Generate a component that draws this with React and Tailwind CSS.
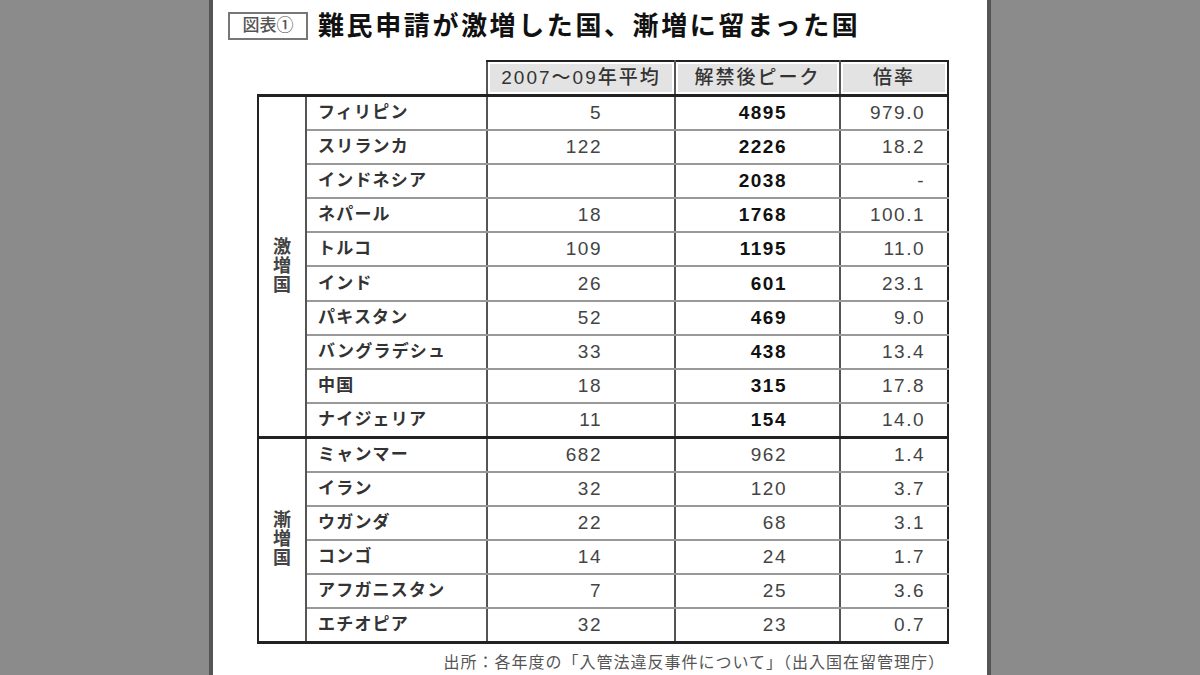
import React from 'react'

const surge = [
  ['フィリピン', '5', '4895', '979.0'],
  ['スリランカ', '122', '2226', '18.2'],
  ['インドネシア', '', '2038', '-'],
  ['ネパール', '18', '1768', '100.1'],
  ['トルコ', '109', '1195', '11.0'],
  ['インド', '26', '601', '23.1'],
  ['パキスタン', '52', '469', '9.0'],
  ['バングラデシュ', '33', '438', '13.4'],
  ['中国', '18', '315', '17.8'],
  ['ナイジェリア', '11', '154', '14.0'],
]

const gradual = [
  ['ミャンマー', '682', '962', '1.4'],
  ['イラン', '32', '120', '3.7'],
  ['ウガンダ', '22', '68', '3.1'],
  ['コンゴ', '14', '24', '1.7'],
  ['アフガニスタン', '7', '25', '3.6'],
  ['エチオピア', '32', '23', '0.7'],
]

const font = { fontFamily: '"Liberation Sans", "Noto Sans CJK JP", sans-serif' }

function VerticalLabel({ text }) {
  return (
    <div className="flex flex-col items-center text-[18px] leading-[19px] text-[#444] font-semibold">
      {text.split('').map((c, i) => (
        <span key={i}>{c}</span>
      ))}
    </div>
  )
}

function Rows({ data, label }) {
  return data.map((r, i) => {
    const first = i === 0
    const top = first ? 'border-t-[3px] border-t-[#222]' : ''
    return (
      <tr key={r[0]} className="h-[34.2px] leading-[20px]">
        {first && (
          <td
            rowSpan={data.length}
            className="border-l-2 border-l-[#222] border-r-2 border-r-[#555] border-t-[3px] border-t-[#222] border-b-2 border-b-[#222] align-middle"
          >
            <VerticalLabel text={label} />
          </td>
        )}
        <td className={`${top} border-b-2 border-b-[#999] border-r-2 border-r-[#555] pl-[11px] text-[17px] tracking-[1.2px] text-[#333] font-semibold whitespace-nowrap`}>
          {r[0]}
        </td>
        <td className={`${top} border-b-2 border-b-[#999] border-r-2 border-r-[#555] pr-[72px] text-right text-[19px] tracking-[1.5px] text-[#444]`}>
          {r[1]}
        </td>
        <td
          className={`${top} border-b-2 border-b-[#999] border-r-2 border-r-[#555] pr-[52px] text-right text-[19px] tracking-[1.5px] ${
            label === '激増国' ? 'font-bold text-[#111]' : 'text-[#444]'
          }`}
        >
          {r[2]}
        </td>
        <td className={`${top} border-b-2 border-b-[#999] border-r-2 border-r-[#222] pr-[22px] text-right text-[19px] tracking-[1.5px] text-[#444]`}>
          {r[3]}
        </td>
      </tr>
    )
  })
}

function HeadCell({ children, last }) {
  return (
    <th className={`border-t-2 border-t-[#222] border-l-2 border-l-[#555] ${last ? 'border-r-2 border-r-[#222]' : 'border-r-2 border-r-[#555]'} p-[2px] h-[32px]`}>
      <div className="h-[28px] flex items-center justify-center bg-[#e3e3e3] text-[19px] leading-[20px] tracking-[2px] font-medium text-[#333]">
        {children}
      </div>
    </th>
  )
}

export default function App() {
  return (
    <div className="w-[1200px] h-[675px] bg-[#8b8b8b] overflow-hidden" style={font}>
      <div className="w-[782px] h-full mx-auto bg-white border-x-4 border-[#555]">
        <div className="flex items-center pt-[12px] pl-[15px]">
          <div className="h-[28px] w-[80px] border-2 border-[#777] flex items-center justify-center text-[17px] text-[#555] font-medium">
            図表①
          </div>
          <h1 className="ml-[10px] text-[26px] leading-[28px] font-bold tracking-[2.6px] text-[#111]">
            難民申請が激増した国、漸増に留まった国
          </h1>
        </div>

        <div className="ml-[44px] mt-[20px] w-[690px]">
          <table className="table-fixed border-collapse w-[690px]">
            <colgroup>
              <col className="w-[48px]" />
              <col className="w-[181px]" />
              <col className="w-[188px]" />
              <col className="w-[165px]" />
              <col className="w-[108px]" />
            </colgroup>
            <thead>
              <tr>
                <th className="border-0" />
                <th className="border-0" />
                <HeadCell>2007～09年平均</HeadCell>
                <HeadCell>解禁後ピーク</HeadCell>
                <HeadCell last>倍率</HeadCell>
              </tr>
            </thead>
            <tbody>
              <Rows data={surge} label="激増国" />
              <Rows data={gradual} label="漸増国" />
              <tr>
                <td colSpan={5} className="border-t-[3px] border-t-[#222] h-0 p-0" />
              </tr>
            </tbody>
          </table>
          <p className="mt-[7px] text-right pr-[2px] text-[16px] tracking-[1px] text-[#555]">
            出所：各年度の「入管法違反事件について」（出入国在留管理庁）
          </p>
        </div>
      </div>
    </div>
  )
}
